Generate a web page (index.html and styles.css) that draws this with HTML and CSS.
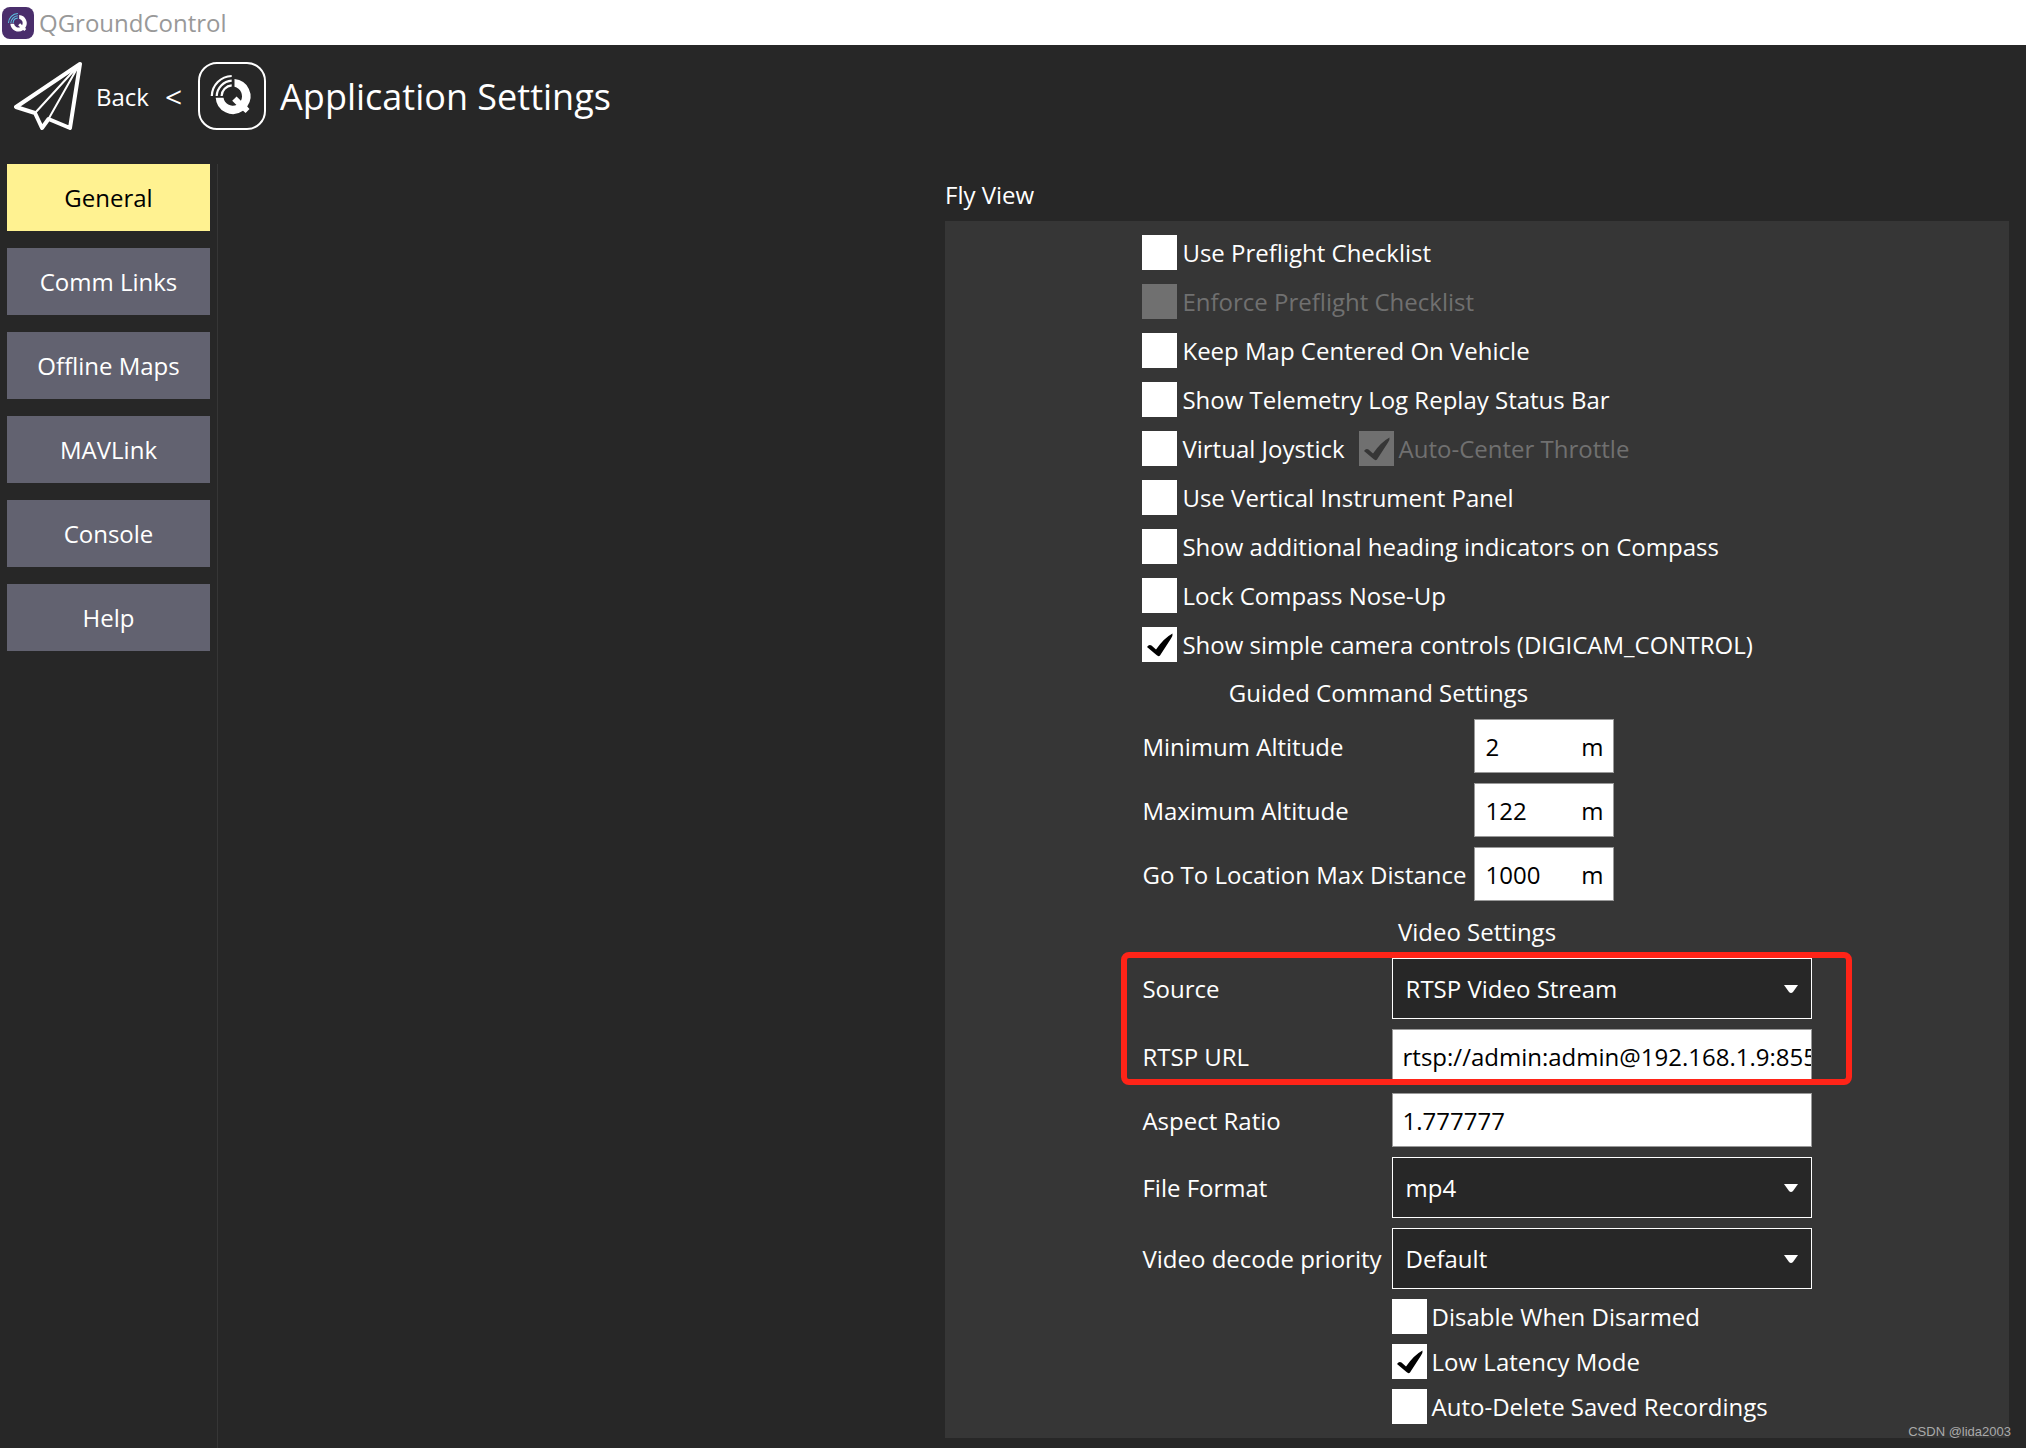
FILE: index.html
```html
<!DOCTYPE html>
<html lang="en">
<head>
<meta charset="utf-8">
<title>QGroundControl</title>
<link rel="stylesheet" href="styles.css">
</head>
<body>
<svg class="defs" aria-hidden="true">
  <symbol id="tick" viewBox="0 0 35 35"><path d="M5 20Q7 17 9.500 18.500L14 22.500Q22 11 30.500 6.500Q31 8.500 29 11.500L18 28.500Q16.500 30 14.500 28Z"/></symbol>
  <symbol id="arrow" viewBox="0 0 14 8"><path d="M0 0H14L9 7Q7 9 5 7Z"/></symbol>
  <symbol id="q-ring" viewBox="0 0 68 68">
    <path d="M36.500 17.100A17.300 17.300 0 0 1 49.200 44.500L51.500 47L47.600 51L45 48.800A17.300 17.300 0 0 1 17.700 35.700H25.500A9.500 9.500 0 0 0 38.500 43L34.200 38.800L38.600 34.600L42.900 38.800A9.700 9.700 0 0 0 36.500 24.800Z"/>
  </symbol>
  <symbol id="q-waves" viewBox="0 0 68 68">
    <path d="M13.800 34A20.500 20.500 0 0 1 33.700 14M18.700 34A16 16 0 0 1 33.700 18.700M23.600 34A11 11 0 0 1 33.700 23.400" fill="none" stroke="currentColor" stroke-width="2.200"/>
  </symbol>
</svg>

<header class="titlebar">
  <svg class="app-icon" viewBox="0 0 68 68" aria-hidden="true">
    <rect width="68" height="68" rx="17" fill="#4a2e6c"/>
    <use href="#q-ring" fill="#fff"/>
    <use href="#q-waves" color="#5cc4e4"/>
  </svg>
  <span>QGroundControl</span>
</header>

<div class="toolbar">
  <button class="back" type="button">
    <svg viewBox="0 0 68 68" aria-hidden="true">
      <g fill="none" stroke="#fff" stroke-linejoin="round">
        <path stroke-width="4" d="M66 2L2 45L21 51L28 66L34.500 57L56 66Z"/>
        <path stroke-width="2" d="M65 3L21 51M65 3L34.500 57"/>
      </g>
    </svg>
    <span>Back</span>
  </button>
  <span class="chevron">&lt;</span>
  <svg class="logo" viewBox="0 0 68 68" aria-hidden="true">
    <rect x="1" y="1" width="66" height="66" rx="18" fill="none" stroke="#fff" stroke-width="2"/>
    <use href="#q-ring" fill="#fff"/>
    <use href="#q-waves" color="#fff"/>
  </svg>
  <h1>Application Settings</h1>
</div>

<div class="body">
  <nav class="sidebar">
    <button class="active" type="button">General</button>
    <button type="button">Comm Links</button>
    <button type="button">Offline Maps</button>
    <button type="button">MAVLink</button>
    <button type="button">Console</button>
    <button type="button">Help</button>
  </nav>
  <main>
    <section class="fly-view">
      <h2>Fly View</h2>
      <div class="panel">
        <div class="settings">
          <label class="check"><input type="checkbox"><svg><use href="#tick"/></svg>Use Preflight Checklist</label>
          <label class="check"><input type="checkbox" disabled><svg><use href="#tick"/></svg>Enforce Preflight Checklist</label>
          <label class="check"><input type="checkbox"><svg><use href="#tick"/></svg>Keep Map Centered On Vehicle</label>
          <label class="check"><input type="checkbox"><svg><use href="#tick"/></svg>Show Telemetry Log Replay Status Bar</label>
          <div class="pair">
            <label class="check"><input type="checkbox"><svg><use href="#tick"/></svg>Virtual Joystick</label>
            <label class="check"><input type="checkbox" checked disabled><svg><use href="#tick"/></svg>Auto-Center Throttle</label>
          </div>
          <label class="check"><input type="checkbox"><svg><use href="#tick"/></svg>Use Vertical Instrument Panel</label>
          <label class="check"><input type="checkbox"><svg><use href="#tick"/></svg>Show additional heading indicators on Compass</label>
          <label class="check"><input type="checkbox"><svg><use href="#tick"/></svg>Lock Compass Nose-Up</label>
          <label class="check"><input type="checkbox" checked><svg><use href="#tick"/></svg>Show simple camera controls (DIGICAM_CONTROL)</label>

          <div class="grid guided">
            <h3>Guided Command Settings</h3>
            <label for="min-alt">Minimum Altitude</label>
            <div class="field"><input id="min-alt" type="text" value="2"><span>m</span></div>
            <label for="max-alt">Maximum Altitude</label>
            <div class="field"><input id="max-alt" type="text" value="122"><span>m</span></div>
            <label for="max-dist">Go To Location Max Distance</label>
            <div class="field"><input id="max-dist" type="text" value="1000"><span>m</span></div>
          </div>

          <div class="grid video">
            <h3>Video Settings</h3>
            <div class="marked">
              <label for="source">Source</label>
              <div class="select"><select id="source"><option>RTSP Video Stream</option></select><svg><use href="#arrow"/></svg></div>
              <label for="url">RTSP URL</label>
              <div class="field"><input id="url" type="text" value="rtsp://admin:admin@192.168.1.9:8554"></div>
            </div>
            <label for="aspect">Aspect Ratio</label>
            <div class="field"><input id="aspect" type="text" value="1.777777"></div>
            <label for="format">File Format</label>
            <div class="select"><select id="format"><option>mp4</option></select><svg><use href="#arrow"/></svg></div>
            <label for="decode">Video decode priority</label>
            <div class="select"><select id="decode"><option>Default</option></select><svg><use href="#arrow"/></svg></div>
            <label class="check"><input type="checkbox"><svg><use href="#tick"/></svg>Disable When Disarmed</label>
            <label class="check"><input type="checkbox" checked><svg><use href="#tick"/></svg>Low Latency Mode</label>
            <label class="check"><input type="checkbox"><svg><use href="#tick"/></svg>Auto-Delete Saved Recordings</label>
          </div>
        </div>
      </div>
    </section>
  </main>
</div>
<div class="watermark">CSDN @lida2003</div>
</body>
</html>
```
FILE: styles.css
```css
* { box-sizing: border-box; }

body {
  position: relative;
  display: flex;
  flex-direction: column;
  min-height: 100vh;
  margin: 0;
  background: #272727;
  color: #fff;
  font: 24px/33px "Open Sans", sans-serif;
}

h1, h2, h3 { margin: 0; font-weight: 400; }
h2, h3 { font-size: 24px; line-height: 33px; }

button, input, select { margin: 0; font: inherit; color: inherit; }

.defs { display: none; }

.titlebar {
  display: flex;
  align-items: center;
  gap: 5px;
  height: 45px;
  padding: 0 2px;
  background: #fff;
  color: #999;
}
.app-icon { width: 32px; height: 32px; }

.toolbar {
  display: flex;
  align-items: center;
  height: 119px;
  padding: 0 14px 17px;
}
.back {
  display: flex;
  align-items: center;
  gap: 14px;
  padding: 0;
  border: 0;
  background: none;
}
.back svg, .logo { width: 68px; height: 68px; }
.chevron { margin: 0 16px; font-size: 30px; }
.toolbar h1 { margin-left: 14px; font-size: 36px; line-height: 49px; }

.body { display: flex; flex: 1; }

.sidebar {
  display: flex;
  flex-direction: column;
  gap: 17px;
  width: 218px;
  padding: 0 7px;
  border-right: 1px solid #363636;
}
.sidebar button {
  height: 67px;
  padding: 0;
  border: 0;
  background: #626270;
}
.sidebar .active { background: #fff291; color: #000; }

main { flex: 1; padding: 14px 17px 10px; }
.fly-view {
  display: flex;
  flex-direction: column;
  gap: 10px;
  max-width: 1064px;
  margin-left: auto;
}
.panel {
  display: flex;
  justify-content: center;
  padding: 14px;
  background: #363636;
}
.settings {
  display: flex;
  flex-direction: column;
  align-items: flex-start;
  gap: 14px;
}

.check {
  display: grid;
  grid-template-columns: 35px auto;
  column-gap: 5px;
  align-items: center;
}
.check input, .check svg {
  grid-area: 1 / 1;
  width: 35px;
  height: 35px;
}
.check input { appearance: none; background: #fff; }
.check svg { visibility: hidden; fill: #000; pointer-events: none; }
.check :checked + svg { visibility: visible; }
.check input:disabled { background: #707070; }
.check :disabled + svg { fill: #363636; }
.check:has(:disabled) { color: #707070; }
.pair { display: flex; gap: 14px; }

.grid {
  display: grid;
  gap: 10px;
  align-items: center;
}
.guided { grid-template-columns: auto 140px; column-gap: 8px; }
.video { grid-template-columns: auto 420px; }
.grid h3 { grid-column: 1 / -1; text-align: center; }
.grid .check { grid-column: 2; }

.field {
  display: flex;
  align-items: center;
  height: 54px;
  padding-left: 10px;
  border: 1px solid #999;
  background: #fff;
  color: #000;
}
.field input {
  flex: 1;
  min-width: 0;
  padding: 0;
  border: 0;
  background: none;
}
.field span { padding: 0 10px; }

.select { display: grid; align-items: center; }
.select select {
  grid-area: 1 / 1;
  width: 100%;
  height: 61px;
  padding: 0 13px;
  appearance: none;
  border: 1px solid #fff;
  border-radius: 0;
  background: #272727;
}
.select svg {
  grid-area: 1 / 1;
  justify-self: end;
  width: 14px;
  height: 8px;
  margin-right: 14px;
  fill: #fff;
  pointer-events: none;
}

.marked {
  position: relative;
  display: grid;
  grid-column: 1 / -1;
  grid-template-columns: subgrid;
  gap: 10px;
  align-items: center;
}
.marked::after {
  content: "";
  position: absolute;
  inset: -6px -40px -2px -21px;
  border: 6px solid #ff2418;
  border-radius: 8px;
  pointer-events: none;
}

.watermark {
  position: absolute;
  right: 15px;
  bottom: 8px;
  color: #aaa;
  font: 13px/16px "Liberation Sans", sans-serif;
}
```
